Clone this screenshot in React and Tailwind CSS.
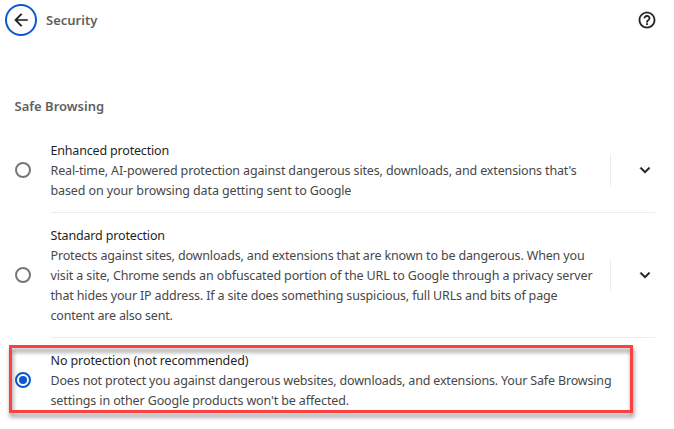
import React from 'react';

const options = [
  {
    title: 'Enhanced protection',
    spacing: 'tracking-[-0.18px]',
    lines: [
      { text: "Real-time, AI-powered protection against dangerous sites, downloads, and extensions that's", spacing: 'tracking-[-0.14px]' },
      { text: 'based on your browsing data getting sent to Google', spacing: 'tracking-[-0.105px]' },
    ],
    expandable: true,
  },
  {
    title: 'Standard protection',
    spacing: 'tracking-[-0.16px]',
    lines: [
      { text: 'Protects against sites, downloads, and extensions that are known to be dangerous. When you', spacing: 'tracking-[-0.155px]' },
      { text: 'visit a site, Chrome sends an obfuscated portion of the URL to Google through a privacy server', spacing: 'tracking-[-0.125px]' },
      { text: 'that hides your IP address. If a site does something suspicious, full URLs and bits of page', spacing: 'tracking-[-0.155px]' },
      { text: 'content are also sent.', spacing: 'tracking-[-0.18px]' },
    ],
    expandable: true,
  },
  {
    title: 'No protection (not recommended)',
    spacing: 'tracking-[-0.1px]',
    lines: [
      { text: 'Does not protect you against dangerous websites, downloads, and extensions. Your Safe Browsing', spacing: 'tracking-[-0.17px]' },
      { text: "settings in other Google products won't be affected.", spacing: 'tracking-[-0.125px]' },
    ],
    selected: true,
  },
];

function Radio({ selected }) {
  return (
    <span
      className={
        selected
          ? 'flex size-4 shrink-0 items-center justify-center rounded-full border-2 border-[#0b57d0]'
          : 'mb-px size-4 shrink-0 rounded-full border-2 border-[#757775]'
      }
    >
      {selected && <span className="size-2 rounded-full bg-[#0b57d0]" />}
    </span>
  );
}

function Header() {
  return (
    <header className="flex h-10 items-center pl-[5px] pr-[17px]">
      <button className="flex size-8 items-center justify-center rounded-full border-2 border-[#0b57d0]">
        <svg viewBox="0 0 24 24" className="size-5 fill-[#1f1f1f] stroke-[#1f1f1f] stroke-[0.15]">
          <path d="M20 11H7.83l5.59-5.59L12 4l-8 8 8 8 1.41-1.41L7.83 13H20v-2z" />
        </svg>
      </button>
      <h1 className="ml-[9px] text-[13px] font-semibold leading-5 text-[#5f5f5f]">Security</h1>
      <svg viewBox="0 0 24 24" className="ml-auto size-5 fill-[#1f1f1f] stroke-[#1f1f1f] stroke-[0.15]">
        <path d="M11 18h2v-2h-2v2zm1-16C6.48 2 2 6.48 2 12s4.48 10 10 10 10-4.48 10-10S17.52 2 12 2zm0 18c-4.41 0-8-3.59-8-8s3.59-8 8-8 8 3.59 8 8-3.59 8-8 8zm0-14c-2.21 0-4 1.79-4 4h2c0-1.1.9-2 2-2s2 .9 2 2c0 2-3 1.75-3 5h2c0-2.25 3-2.5 3-5 0-2.21-1.79-4-4-4z" />
      </svg>
    </header>
  );
}

function Option({ option, last }) {
  return (
    <div className="flex items-center pl-[15px]">
      <Radio selected={option.selected} />
      <div className={`ml-5 flex w-[604px] items-center py-[11px] ${last ? '' : 'border-b border-[#ececec]'}`}>
        <div className="-ml-[0.5px] flex w-[559.5px] shrink-0 flex-col items-start whitespace-nowrap pt-2 pb-0 -mt-1.5 leading-5">
          <div className={`text-[#1f1f1f] ${option.spacing}`}>{option.title}</div>
          {option.lines.map((line) => (
            <div key={line.text} className={`text-[#474747] ${line.spacing}`}>{line.text}</div>
          ))}
        </div>
        {option.expandable && (
          <div className="flex h-8 w-[45px] shrink-0 items-center">
            <span className="h-8 w-px bg-[#ececec]" />
            <svg viewBox="0 0 24 24" className="ml-6 size-5 shrink-0 fill-[#1f1f1f] stroke-[#1f1f1f] stroke-[0.6]">
              <path d="M7.41 8.59 12 13.17l4.59-4.58L18 10l-6 6-6-6 1.41-1.41z" />
            </svg>
          </div>
        )}
      </div>
    </div>
  );
}

export default function App() {
  return (
    <div className="relative h-[429px] w-[674px] overflow-hidden bg-white font-['Noto_Sans',sans-serif] text-[12.5px]">
      <Header />
      <h2 className="ml-[14.5px] mt-14 text-[13px] font-semibold leading-5 text-[#5f5f5f]">Safe Browsing</h2>
      <div className="mt-3">
        {options.map((option, i) => (
          <Option key={option.title} option={option} last={i === options.length - 1} />
        ))}
      </div>
      <div className="pointer-events-none absolute left-[9px] top-[345px] h-[68px] w-[624px] border-[3px] border-[#fa4141] drop-shadow-[1px_4px_2px_rgba(0,0,0,0.45)]" />
    </div>
  );
}
